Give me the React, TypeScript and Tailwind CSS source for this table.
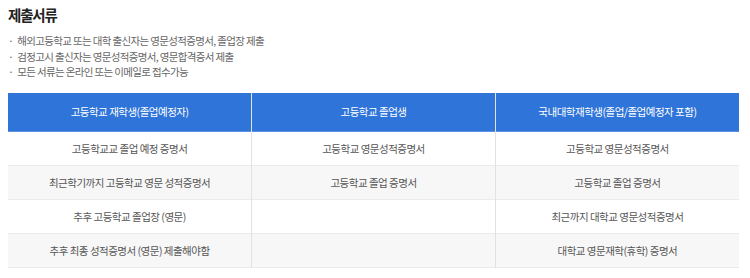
const notes = [
  "해외고등학교 또는 대학 출신자는 영문성적증명서, 졸업장 제출",
  "검정고시 출신자는 영문성적증명서, 영문합격증서 제출",
  "모든 서류는 온라인 또는 이메일로 접수가능",
];

const headers = ["고등학교 재학생(졸업예정자)", "고등학교 졸업생", "국내대학재학생(졸업/졸업예정자 포함)"];

const rows = [
  ["고등학교교 졸업 예정 증명서", "고등학교 영문성적증명서", "고등학교 영문성적증명서"],
  ["최근학기까지 고등학교 영문 성적증명서", "고등학교 졸업 증명서", "고등학교 졸업 증명서"],
  ["추후 고등학교 졸업장 (영문)", "", "최근까지 대학교 영문성적증명서"],
  ["추후 최종 성적증명서 (영문) 제출해야함", "", "대학교 영문재학(휴학) 증명서"],
];

export default function App() {
  return (
    <div className="w-[750px] h-[278px] bg-white pl-[8px] pt-[4px] font-['Noto_Sans_CJK_KR',sans-serif]">
      <h2 className="text-[14.5px] font-bold text-[#222] leading-[22px] tracking-[-1.2px]">제출서류</h2>

      <ul className="mt-[7px] text-[10.5px] leading-[15.5px] text-[#666] tracking-[-0.65px]">
        {notes.map((n) => (
          <li key={n} className="flex gap-[4px]">
            <span>·</span>
            <span>{n}</span>
          </li>
        ))}
      </ul>

      <table className="mt-[13px] w-[731px] table-fixed border-collapse text-[10.5px] tracking-[-0.5px]">
        <thead>
          <tr className="bg-[#2f74d9] h-[39px] border-b border-[#5b8fe0]">
            {headers.map((h, i) => (
              <th
                key={h}
                className={`font-normal text-white ${i > 0 ? "border-l border-[#e2e2e2]" : ""}`}
              >
                {h}
              </th>
            ))}
          </tr>
        </thead>
        <tbody>
          {rows.map((r, ri) => (
            <tr
              key={ri}
              className={`h-[34px] border-b border-[#ebebeb] ${ri % 2 === 1 ? "bg-[#f7f7f7]" : "bg-white"}`}
            >
              {r.map((c, ci) => (
                <td
                  key={ci}
                  className={`text-center text-[#555] ${ci > 0 ? "border-l border-[#e2e2e2]" : ""}`}
                >
                  {c}
                </td>
              ))}
            </tr>
          ))}
        </tbody>
      </table>
    </div>
  );
}
